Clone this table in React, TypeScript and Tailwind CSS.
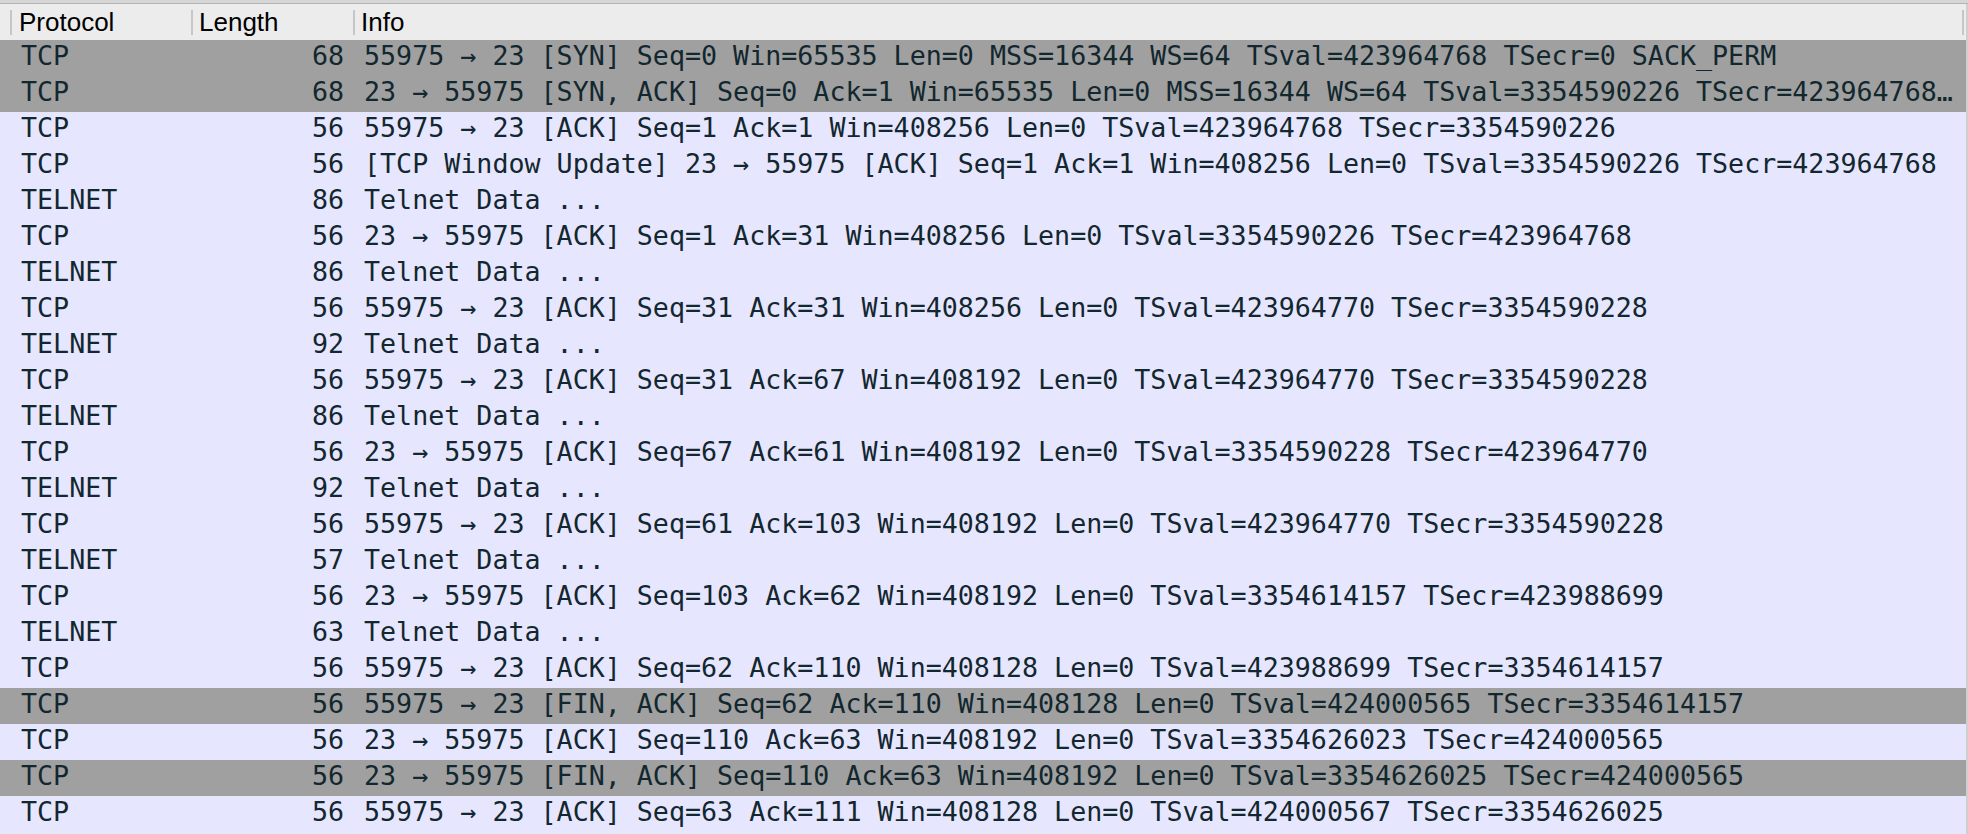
import React from "react";

interface Packet {
  proto: string;
  len: number;
  info: string;
  flag?: boolean; // SYN/FIN rows get the gray colouring rule
}

const packets: Packet[] = [
  { proto: "TCP", len: 68, flag: true, info: "55975 → 23 [SYN] Seq=0 Win=65535 Len=0 MSS=16344 WS=64 TSval=423964768 TSecr=0 SACK_PERM" },
  { proto: "TCP", len: 68, flag: true, info: "23 → 55975 [SYN, ACK] Seq=0 Ack=1 Win=65535 Len=0 MSS=16344 WS=64 TSval=3354590226 TSecr=423964768…" },
  { proto: "TCP", len: 56, info: "55975 → 23 [ACK] Seq=1 Ack=1 Win=408256 Len=0 TSval=423964768 TSecr=3354590226" },
  { proto: "TCP", len: 56, info: "[TCP Window Update] 23 → 55975 [ACK] Seq=1 Ack=1 Win=408256 Len=0 TSval=3354590226 TSecr=423964768" },
  { proto: "TELNET", len: 86, info: "Telnet Data ..." },
  { proto: "TCP", len: 56, info: "23 → 55975 [ACK] Seq=1 Ack=31 Win=408256 Len=0 TSval=3354590226 TSecr=423964768" },
  { proto: "TELNET", len: 86, info: "Telnet Data ..." },
  { proto: "TCP", len: 56, info: "55975 → 23 [ACK] Seq=31 Ack=31 Win=408256 Len=0 TSval=423964770 TSecr=3354590228" },
  { proto: "TELNET", len: 92, info: "Telnet Data ..." },
  { proto: "TCP", len: 56, info: "55975 → 23 [ACK] Seq=31 Ack=67 Win=408192 Len=0 TSval=423964770 TSecr=3354590228" },
  { proto: "TELNET", len: 86, info: "Telnet Data ..." },
  { proto: "TCP", len: 56, info: "23 → 55975 [ACK] Seq=67 Ack=61 Win=408192 Len=0 TSval=3354590228 TSecr=423964770" },
  { proto: "TELNET", len: 92, info: "Telnet Data ..." },
  { proto: "TCP", len: 56, info: "55975 → 23 [ACK] Seq=61 Ack=103 Win=408192 Len=0 TSval=423964770 TSecr=3354590228" },
  { proto: "TELNET", len: 57, info: "Telnet Data ..." },
  { proto: "TCP", len: 56, info: "23 → 55975 [ACK] Seq=103 Ack=62 Win=408192 Len=0 TSval=3354614157 TSecr=423988699" },
  { proto: "TELNET", len: 63, info: "Telnet Data ..." },
  { proto: "TCP", len: 56, info: "55975 → 23 [ACK] Seq=62 Ack=110 Win=408128 Len=0 TSval=423988699 TSecr=3354614157" },
  { proto: "TCP", len: 56, flag: true, info: "55975 → 23 [FIN, ACK] Seq=62 Ack=110 Win=408128 Len=0 TSval=424000565 TSecr=3354614157" },
  { proto: "TCP", len: 56, info: "23 → 55975 [ACK] Seq=110 Ack=63 Win=408192 Len=0 TSval=3354626023 TSecr=424000565" },
  { proto: "TCP", len: 56, flag: true, info: "23 → 55975 [FIN, ACK] Seq=110 Ack=63 Win=408192 Len=0 TSval=3354626025 TSecr=424000565" },
  { proto: "TCP", len: 56, info: "55975 → 23 [ACK] Seq=63 Ack=111 Win=408128 Len=0 TSval=424000567 TSecr=3354626025" },
];

const Separator = () => <div className="w-[2px] h-[25px] bg-[#c6c6c6] shrink-0" />;

export default function App() {
  return (
    <div className="w-[1968px] h-[834px] bg-[#e7e6ff] overflow-hidden flex flex-col">
      {/* window chrome strip above the column headers */}
      <div className="h-[3px] bg-[#d6d6d6]" />
      <div className="h-[1px] bg-[#b4b4b4]" />

      {/* column headers */}
      <div
        className="flex items-center h-[36px] bg-[#ececec] text-black text-[26px] leading-[34px] border-r-2 border-[#cfcfcf]"
        style={{ fontFamily: '"Liberation Sans", Arial, sans-serif' }}
      >
        <div className="w-[10px] shrink-0" />
        <Separator />
        <div className="w-[179px] shrink-0 pl-[7px]">Protocol</div>
        <Separator />
        <div className="w-[160px] shrink-0 pl-[6px]">Length</div>
        <Separator />
        <div className="flex-1 pl-[6px]">Info</div>
        <Separator />
        <div className="w-[2px] shrink-0" />
      </div>

      {/* packet rows */}
      <div
        className="flex flex-col text-[#12272e] text-[26.66px] border-r-2 border-[#cfcfcf]"
        style={{ fontFamily: '"DejaVu Sans Mono", "Liberation Mono", monospace' }}
      >
        {packets.map((p, i) => (
          <div
            key={i}
            className={`flex h-[36px] leading-[32px] whitespace-nowrap ${p.flag ? "bg-[#a0a0a0]" : "bg-[#e7e6ff]"}`}
          >
            <div className="w-[191px] shrink-0 pl-[21px]">{p.proto}</div>
            <div className="w-[162px] shrink-0 text-right pr-[9px]">{p.len}</div>
            <div className="flex-1 min-w-0 pl-[11px] overflow-hidden">{p.info}</div>
          </div>
        ))}
      </div>
      <div className="flex-1 bg-[#e7e6ff] border-r-2 border-[#cfcfcf]" />
    </div>
  );
}
